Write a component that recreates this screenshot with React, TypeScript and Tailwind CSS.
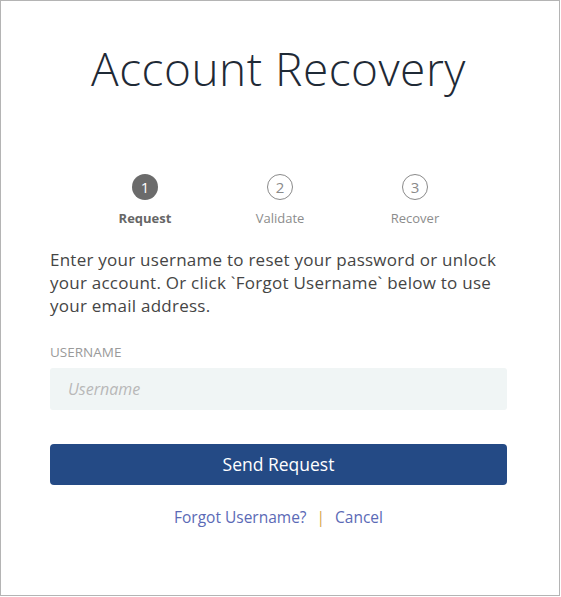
import React from "react";

const font = { fontFamily: '"Open Sans", "Liberation Sans", sans-serif' };

function Step({ n, label, active }: { n: number; label: string; active?: boolean }) {
  return (
    <div className="flex w-[135px] flex-col items-center">
      <div
        className={
          active
            ? "flex h-[26px] w-[26px] items-center justify-center rounded-full bg-[#6b6b6b] text-[15px] leading-none text-white"
            : "flex h-[26px] w-[26px] items-center justify-center rounded-full border border-[#8a8a8a] text-[15px] leading-none text-[#8a8a8a]"
        }
      >
        {n}
      </div>
      <div
        className={
          active
            ? "mt-[9px] text-[13px] font-bold leading-[18px] text-[#666]"
            : "mt-[9px] text-[13px] leading-[18px] text-[#8c8c8c]"
        }
      >
        {label}
      </div>
    </div>
  );
}

export default function App() {
  return (
    <div className="h-[597px] w-[561px] bg-white" style={font}>
      <div className="box-border h-[596px] w-[560px] border border-[#b4b4b4] bg-white pl-[49px] pr-[52px]">
        <h1 className="pt-[39px] text-center text-[46px] font-light leading-[56px] tracking-[0.5px] text-[#1f2a36]">
          Account Recovery
        </h1>
        <div className="mt-[78px] flex justify-center pl-[3px]">
          <Step n={1} label="Request" active />
          <Step n={2} label="Validate" />
          <Step n={3} label="Recover" />
        </div>
        <p className="mt-[21px] text-[17px] leading-[23px] tracking-[0.25px] text-[#454545]">
          Enter your username to reset your password or unlock your account. Or click `Forgot Username` below to use
          your email address.
        </p>
        <div className="mt-[26px] text-[13.5px] leading-[18px] text-[#9a9a9a]">USERNAME</div>
        <div className="mt-[7px] flex h-[42px] items-center rounded-[3px] bg-[#f0f5f5] px-[18px]">
          <span className="text-[16px] italic text-[#b8b8b8]">Username</span>
        </div>
        <div className="mt-[34px] flex h-[41px] items-center justify-center rounded-[4px] bg-[#244a85] text-[17.5px] font-medium text-white">
          Send Request
        </div>
        <div className="mt-[21px] flex items-center justify-center text-[15.5px] text-[#5b6ab6]">
          <span>Forgot Username?</span>
          <span className="mx-[10px] text-[#d6a64a]">|</span>
          <span>Cancel</span>
        </div>
      </div>
    </div>
  );
}
